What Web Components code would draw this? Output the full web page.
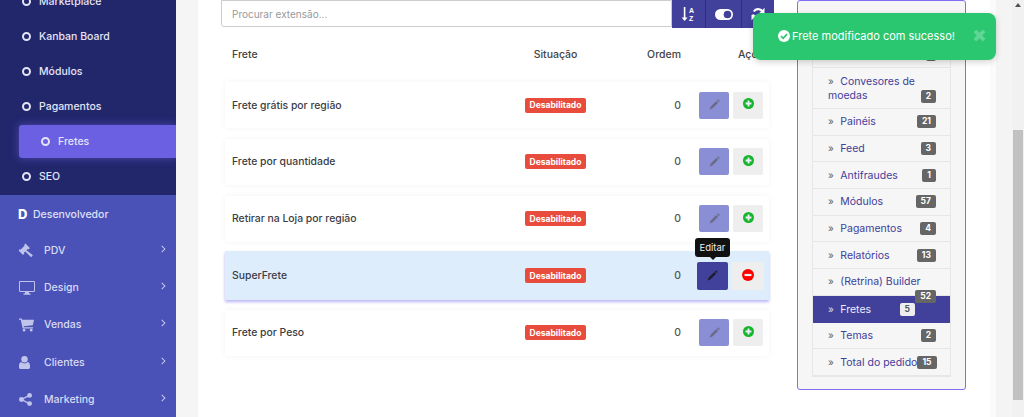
<!DOCTYPE html>
<html lang="pt">
<head>
<meta charset="utf-8">
<title>Fretes</title>
<style>
  html, body { margin: 0; height: 100%; overflow: hidden; background: #f6f6f6; }
  body { font-family: Inter, "Liberation Sans", sans-serif; }
</style>
</head>
<body>
<app-shell>
  <side-nav slot="nav">
    <nav-sub style="margin-top:-16px">Marketplace</nav-sub>
    <nav-sub>Kanban Board</nav-sub>
    <nav-sub>Módulos</nav-sub>
    <nav-sub>Pagamentos</nav-sub>
    <nav-sub active>Fretes</nav-sub>
    <nav-sub>SEO</nav-sub>
    <nav-main slot="main" letter="D">Desenvolvedor</nav-main>
    <nav-main slot="main" icon="gavel" arrow>PDV</nav-main>
    <nav-main slot="main" icon="desktop" arrow>Design</nav-main>
    <nav-main slot="main" icon="cart" arrow>Vendas</nav-main>
    <nav-main slot="main" icon="user" arrow>Clientes</nav-main>
    <nav-main slot="main" icon="share" arrow>Marketing</nav-main>
  </side-nav>

  <search-bar slot="search"></search-bar>
  <ext-head slot="table"></ext-head>
  <ext-row slot="table" style="margin-top:21px">Frete grátis por região</ext-row>
  <ext-row slot="table" style="margin-top:10.5px">Frete por quantidade</ext-row>
  <ext-row slot="table" style="margin-top:11px">Retirar na Loja por região</ext-row>
  <ext-row slot="table" style="margin-top:9.5px" enabled>SuperFrete</ext-row>
  <ext-row slot="table" style="margin-top:9.5px">Frete por Peso</ext-row>

  <cat-panel slot="side">
    <cat-item count="" style="height:26px"></cat-item>
    <cat-item count="2" tall>Convesores de moedas</cat-item>
    <cat-item count="21">Painéis</cat-item>
    <cat-item count="3">Feed</cat-item>
    <cat-item count="1">Antifraudes</cat-item>
    <cat-item count="57">Módulos</cat-item>
    <cat-item count="4">Pagamentos</cat-item>
    <cat-item count="13">Relatórios</cat-item>
    <cat-item count="52" drop>(Retrina) Builder</cat-item>
    <cat-item count="5" active>Fretes</cat-item>
    <cat-item count="2">Temas</cat-item>
    <cat-item count="15">Total do pedido</cat-item>
  </cat-panel>

  <toast-msg slot="toast">Frete modificado com sucesso!</toast-msg>
</app-shell>

<script>
const ICONS = {
  gavel: '<svg viewBox="0 0 16 16" width="15" height="15"><path fill="currentColor" d="M6.800.6 11.600 5.400 10.200 6.800 9.500 6.100 7.900 7.700 14.800 13 13 15.200 6.600 9 5 10.600 5.700 11.300 4.300 12.700-.5 7.900.9 6.500 1.600 7.200 6.100 2.700 5.400 2z"/></svg>',
  desktop: '<svg viewBox="0 0 16 14" width="16" height="14"><path fill="currentColor" fill-rule="evenodd" d="M1.200 0h13.600C15.500 0 16 .5 16 1.200v8.600c0 .7-.5 1.200-1.200 1.200H9.800l.4 1.600h1.300v1.100H4.500v-1.100h1.300l.4-1.600H1.200C.5 11 0 10.500 0 9.800V1.200C0 .5.500 0 1.200 0zM1 1v9h14V1z"/></svg>',
  cart: '<svg viewBox="0 0 16 14" width="15" height="14"><path fill="currentColor" d="M0 0h2.900l.4 1.500H16l-1.300 5.800-9.800 1 .3 1.200h9.900v1.300H3.900L1.900 1.300H0z"/><circle fill="currentColor" cx="5.400" cy="12.500" r="1.400"/><circle fill="currentColor" cx="13" cy="12.500" r="1.400"/></svg>',
  user: '<svg viewBox="0 0 12 14" width="11" height="13"><circle fill="currentColor" cx="6" cy="3.500" r="3.500"/><path fill="currentColor" d="M2.500 6.500C3.500 7.500 4.600 8 6 8s2.500-.5 3.500-1.500C11 6.800 12 8.200 12 10.500V12.500C12 13.400 11.400 14 10.500 14h-9C.6 14 0 13.400 0 12.500V10.500C0 8.200 1 6.800 2.500 6.500z"/></svg>',
  share: '<svg viewBox="0 0 14 14" width="13" height="13"><circle fill="currentColor" cx="2.600" cy="7" r="2.600"/><circle fill="currentColor" cx="11.400" cy="2.600" r="2.600"/><circle fill="currentColor" cx="11.400" cy="11.400" r="2.600"/><path stroke="currentColor" stroke-width="1.500" fill="none" d="M11.400 2.600 2.600 7l8.800 4.400"/></svg>',
  pencil: '<svg viewBox="0 0 14 14" width="13" height="13"><path fill="currentColor" d="M10.800 1.300 12.700 3.200 11.600 4.300 9.700 2.400zM9 3.100 10.900 5 4.700 11.200 1.700 12.300 2.800 9.300z"/><path stroke="#0000002b" stroke-width=".6" d="M7.200 5.300 8.800 6.900M5.200 7.300 6.800 8.900"/></svg>',
  plus: '<svg viewBox="0 0 12 12" width="11" height="11"><circle fill="#16b52b" cx="6" cy="6" r="6"/><path fill="#eef" d="M5 2.800h2V5h2.200v2H7v2.200H5V7H2.800V5H5z"/></svg>',
  minus: '<svg viewBox="0 0 12 12" width="12" height="12"><circle fill="#f00" cx="6" cy="6" r="6"/><path fill="#eee" d="M2.500 4.900h7v2.200h-7z"/></svg>',
  check: '<svg viewBox="0 0 12 12" width="12" height="12"><circle fill="#fff" cx="6" cy="6" r="6"/><path fill="none" stroke="#2ac670" stroke-width="1.700" d="M3 6.200 5.200 8.300 9 4.200"/></svg>',
  times: '<svg viewBox="0 0 12 12" width="13" height="13"><path fill="currentColor" d="M3 .5 6 3.500 9 .5 11.500 3 8.500 6 11.500 9 9 11.500 6 8.500 3 11.500 .5 9 3.500 6 .5 3z"/></svg>',
  sort: '<svg viewBox="0 0 15 16" width="15" height="16"><path fill="#fff" d="M2.800 1h1.600v10.500H6.600L3.600 15 .6 11.500h2.200z"/><text x="8" y="6.500" font-size="7" font-weight="700" fill="#fff" font-family="Liberation Sans">A</text><text x="8" y="14.500" font-size="7" font-weight="700" fill="#fff" font-family="Liberation Sans">Z</text></svg>',
  toggle: '<svg viewBox="0 0 18 11" width="18" height="11"><rect fill="#fff" width="18" height="11" rx="5.500"/><circle fill="#41409a" cx="12.500" cy="5.500" r="3.800"/></svg>',
  refresh: '<svg viewBox="0 0 14 14" width="14" height="14"><path fill="none" stroke="#fff" stroke-width="2.200" d="M12 6.500A5 5 0 0 0 2.800 4.500M2 7.500A5 5 0 0 0 11.200 9.500"/><path fill="#fff" d="M13.500 .8V6H8.300zM.5 13.200V8h5.200z"/></svg>'
};

function define(name, css, html) {
  customElements.define(name, class extends HTMLElement {
    connectedCallback() {
      if (this.shadowRoot) return;
      this.attachShadow({ mode: 'open' }).innerHTML = `<style>${css}</style>${typeof html === 'function' ? html(this) : html}`;
    }
  });
}

define('app-shell', `
  :host { display: grid; grid-template-columns: 176px 22px 792px 22px 12px; height: 417px; overflow: hidden; position: relative; }
  .card { background: #fff; display: grid; grid-template-columns: 553px 169px; column-gap: 23px; padding-left: 23px; box-sizing: border-box; height: 417px; overflow: hidden; align-content: start; }
  .bar { background: #f1f1f1; position: relative; display: flex; flex-direction: column; align-items: center; }
  .arrow { width: 0; height: 0; border: 3.500px solid transparent; border-bottom: 4px solid #505050; border-top: 0; margin: 3px 0 123px; }
  .thumb { width: 10px; height: 270px; background: #c1c1c1; }
  .gut { background: #f5f5f5; }
  .gut.r { background: linear-gradient(90deg, #fbfbfb 0 6px, #f4f4f4 6px); }
`, `
  <slot name="nav"></slot>
  <div class="gut"></div>
  <div class="card">
    <div><slot name="search"></slot><slot name="table"></slot></div>
    <div><slot name="side"></slot></div>
  </div>
  <div class="gut r"></div>
  <div class="bar"><div class="arrow"></div><div class="thumb"></div></div>
  <slot name="toast"></slot>
`);

define('side-nav', `
  :host { display: flex; flex-direction: column; background: #4a52b8; height: 417px; overflow: hidden; }
  .sub { background: #22276c; height: 195px; flex: none; }
`, `<div class="sub"><slot></slot></div><div><slot name="main"></slot></div>`);

define('nav-sub', `
  :host { display: flex; align-items: center; height: 35px; box-sizing: border-box; padding-left: 22px; font-size: 10.500px; font-weight: 500; color: #e4e4f4; gap: 8px; white-space: nowrap; }
  i { width: 5px; height: 5px; border: 2px solid #e4e4f4; border-radius: 50%; flex: none; }
  :host([active]) { background: #6b5fe2; margin: 1px 0 0 19px; height: 33px; border-radius: 3px 0 0 3px; box-shadow: 0 0 8px #6b5fe299; position: relative; margin-bottom: 1px; }
`, `<i></i><span><slot></slot></span>`);

define('nav-main', `
  :host { display: flex; align-items: center; height: 37.200px; box-sizing: border-box; padding: 0 11px 0 19px; font-size: 10.500px; font-weight: 500; color: #d8daf4; white-space: nowrap; }
  :host([letter]) { height: 37px; padding-top: 1px; padding-left: 18px; color: #dfe0f6; }
  .ic { width: 25px; flex: none; display: flex; align-items: center; color: #c0c4ea; }
  :host([letter]) .ic { width: 15px; font-size: 13px; font-weight: 800; color: #fff; }
  .t { flex: 1; }
  .ch { width: 5px; height: 5px; border: solid #d8daf4; border-width: 1.500px 1.500px 0 0; transform: rotate(45deg) scale(.8); margin-bottom: 3px; }
`, (el) => `
  <span class="ic">${el.getAttribute('letter') || ICONS[el.getAttribute('icon')] || ''}</span>
  <span class="t"><slot></slot></span>
  ${el.hasAttribute('arrow') ? '<span class="ch"></span>' : ''}
`);

define('search-bar', `
  :host { display: flex; height: 27px; width: 553px; }
  .in { flex: none; width: 451px; height: 27px; box-sizing: border-box; border: 1px solid #ccc; border-radius: 0 0 0 3px; padding: 0 10px; display: flex; align-items: center; font-size: 10px; color: #999; }
  .b { flex: none; height: 28px; background: #41409a; display: flex; align-items: center; justify-content: center; border-right: 1px solid #2f2e7c; box-sizing: border-box; }
`, `
  <div class="in">Procurar extensão...</div>
  <div class="b" style="width:34px">${ICONS.sort}</div>
  <div class="b" style="width:36px">${ICONS.toggle}</div>
  <div class="b" style="width:32px;border:0">${ICONS.refresh}</div>
`);

define('ext-head', `
  :host { display: grid; grid-template-columns: 300px 61px 113px 70px; width: 544px; margin: 20px 0 0 4px; height: 14px; align-items: center; font-size: 10.500px; font-weight: 500; color: #444; white-space: nowrap; }
  .a { padding-left: 7px; }
  .c { text-align: center; }
  .r { text-align: right; padding-right: 18px; }
  .s { padding-left: 39px; }
`, `<div class="a">Frete</div><div class="c">Situação</div><div class="r">Ordem</div><div class="s">Ações</div>`);

define('ext-row', `
  :host { display: grid; grid-template-columns: 300px 61px 113px 70px; width: 544px; height: 46px; margin-left: 4px; align-items: center; background: #fff; box-shadow: 0 0 6px #0000000d; font-size: 10.400px; font-weight: 500; color: #3c3c44; white-space: nowrap; position: relative; }
  :host([enabled]) { height: 49px; background: #deedfb; box-shadow: 0 2px 3px #b9b4f5; }
  .n { padding-left: 7px; }
  .o { text-align: right; padding-right: 18px; color: #555; }
  .badge { background: #e74c3c; color: #fff; font-size: 8.500px; font-weight: 700; height: 15px; border-radius: 2px; display: flex; align-items: center; justify-content: center; }
  .act { display: flex; gap: 4px; align-items: center; position: relative; }
  .edit { width: 30px; height: 27px; background: #8a8ed4; border-radius: 2px; display: flex; align-items: center; justify-content: center; color: #6b6b8a; padding-bottom: 1px; box-sizing: border-box; }
  .tog { width: 30px; height: 27px; background: #eee; border-radius: 2px; display: flex; align-items: center; justify-content: center; padding-bottom: 3px; box-sizing: border-box; }
  :host([enabled]) .act { margin-left: -2px; gap: 3px; }
  :host([enabled]) .edit { width: 31px; background: #41409a; color: #1e1e2e; height: 28px; }
  :host([enabled]) .tog { width: 33px; height: 28px; padding-bottom: 2px; }
  .tip { position: absolute; left: -2px; top: -24px; width: 35px; height: 19px; background: #111; color: #eee; font-size: 9.500px; font-weight: 400; display: flex; align-items: center; justify-content: center; border-radius: 3px; box-sizing: border-box; }
  .tip::after { content: ""; position: absolute; bottom: -3px; left: 15px; border: 3px solid transparent; border-top-color: #111; border-bottom: 0; }
`, (el) => {
  const on = el.hasAttribute('enabled');
  return `
    <div class="n"><slot></slot></div>
    <div class="badge">Desabilitado</div>
    <div class="o">0</div>
    <div class="act">
      <div class="edit">${ICONS.pencil}</div>
      <div class="tog">${on ? ICONS.minus : ICONS.plus}</div>
      ${on ? '<div class="tip">Editar</div>' : ''}
    </div>`;
});

define('cat-panel', `
  :host { display: block; box-sizing: border-box; width: 169px; height: 390px; }
  .box { box-sizing: border-box; height: 100%; border: 1px solid #7f6ff5; border-radius: 3px; background: #f6f6f6; padding: 41px 14px 0; }
  .list { border: 1px solid #e6e6e6; border-top: 0; }
`, `<div class="box"><div class="list"><slot></slot></div></div>`);

define('cat-item', `
  :host { display: flex; position: relative; box-sizing: border-box; height: 26.700px; padding: 0 14px 0 15px; align-items: center; justify-content: space-between; border-bottom: 1px solid #e6e6e6; font-size: 10.500px; color: #41409a; white-space: nowrap; }
  :host([tall]) { height: 41px; align-items: flex-start; white-space: normal; padding-top: 6px; line-height: 14px; }
  :host([active]) { background: #41409a; color: #eef; border-bottom: 0; padding-right: 35px; }
  .t { flex: 1; }
  .t::before { content: "»"; margin-right: 6.500px; font-size: 10px; color: #666; }
  :host([active]) .t::before { color: #ddd; }
  .c { background: #666; color: #fff; font-size: 8.500px; font-weight: 700; padding: 0 5px; height: 13px; line-height: 13px; border-radius: 2px; flex: none; }
  :host([active]) .c { background: #eee; color: #555; }
  :host([tall]) .c { position: absolute; right: 14px; bottom: 5.500px; }
  :host([drop]) .c { position: absolute; right: 14px; bottom: -8px; z-index: 2; }
  .none { flex: 1; }
`, (el) => `
  ${el.textContent.trim() ? '<span class="t"><slot></slot></span>' : '<span class="none"></span>'}
  <span class="c">${el.getAttribute('count')}</span>
`);

define('toast-msg', `
  :host { position: absolute; left: 753px; top: 13px; width: 243px; height: 47px; box-sizing: border-box; background: #2ac670; border-radius: 8px; box-shadow: 0 2px 6px #0000002e; color: #fff; font-size: 11px; display: flex; align-items: center; padding: 0 10px 2px 25px; gap: 2px; white-space: nowrap; }
  .t { flex: 1; }
  .x { color: #5fd695; display: flex; }
`, `${ICONS.check}<span class="t"><slot></slot></span><span class="x">${ICONS.times}</span>`);
</script>
</body>
</html>
